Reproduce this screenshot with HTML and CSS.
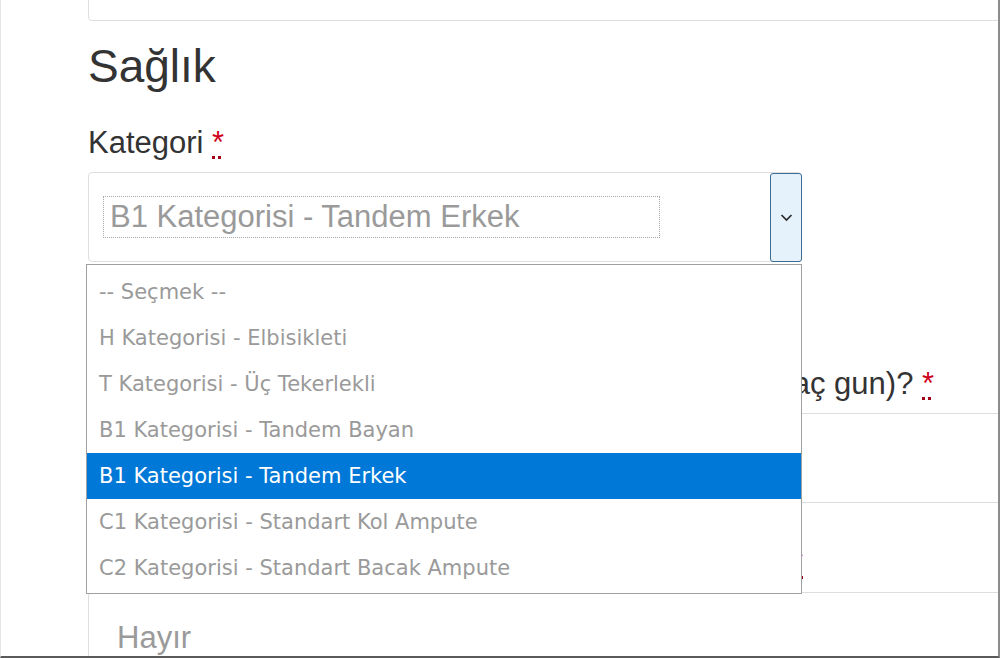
FILE: index.html
```html
<!DOCTYPE html>
<html lang="tr">
<head>
<meta charset="utf-8">
<title>Sağlık</title>
<link rel="stylesheet" href="styles.css">
</head>
<body>
<div class="frame">
  <div class="page">
    <div class="input top-input"></div>
    <h2 class="section-title">Sağlık</h2>

    <div class="group group-first">
      <label class="label">Kategori <abbr class="req" title="zorunlu">*</abbr></label>
      <div class="select">
        <div class="select-value"><span class="focus">B1 Kategorisi - Tandem Erkek</span></div>
        <div class="select-btn">
          <svg width="13" height="9" viewBox="0 0 13 9"><polyline points="1.5,2 6.5,7 11.5,2" fill="none" stroke="#2b2b2b" stroke-width="1.7"/></svg>
        </div>
        <ul class="listbox">
          <li>-- Seçmek --</li>
          <li>H Kategorisi - Elbisikleti</li>
          <li>T Kategorisi - Üç Tekerlekli</li>
          <li>B1 Kategorisi - Tandem Bayan</li>
          <li class="selected">B1 Kategorisi - Tandem Erkek</li>
          <li>C1 Kategorisi - Standart Kol Ampute</li>
          <li>C2 Kategorisi - Standart Bacak Ampute</li>
        </ul>
      </div>
    </div>

    <div class="group group-second">
      <label class="label">Son bir yılda toplam hastanede yatış süresi nedir (kaç gun)? <abbr class="req" title="zorunlu">*</abbr></label>
      <div class="input"></div>
    </div>

    <div class="group group-third">
      <label class="label">Sürekli biçimde kullandığınız başka bir ilaç var mı? <abbr class="req" title="zorunlu">*</abbr></label>
      <div class="input"><span class="input-value">Hayır</span></div>
    </div>
  </div>
</div>
</body>
</html>
```

FILE: styles.css
```css
* {
  box-sizing: border-box;
}

body {
  margin: 0;
  background: #fff;
  font-family: "Liberation Sans", Arial, sans-serif;
}

.frame {
  width: 1000px;
  height: 658px;
  overflow: hidden;
  background: #fff;
  border-left: 1px solid #e6e6e6;
  border-right: 2px solid #8c8c8c;
  border-bottom: 2px solid #5a5a5a;
}

.page {
  width: 1048px;
  padding-left: 87px;
}

.input {
  height: 90px;
  border: 1px solid #dedede;
  border-radius: 4px;
  background: #fff;
}

.top-input {
  margin-top: -69px;
}

.section-title {
  margin: 20px 0 0;
  font-size: 46px;
  line-height: 50px;
  font-weight: 400;
  color: #333;
}

.group-first {
  margin-top: 34px;
}

.group-second {
  margin-top: 104px;
}

.group-third {
  margin-top: 42px;
}

.label {
  display: block;
  font-size: 31px;
  line-height: 36px;
  color: #333;
  margin-bottom: 11px;
  white-space: nowrap;
}

.req {
  color: #d0021b;
  text-decoration: underline dotted #a0001a;
  text-decoration-thickness: 3px;
  text-underline-offset: 3px;
}

.select {
  position: relative;
  display: flex;
  width: 714px;
  height: 90px;
  border: 1px solid #dedede;
  border-radius: 4px;
  background: #fff;
}

.select-value {
  flex: 1;
  padding: 23px 0 0 14px;
}

.focus {
  display: block;
  width: 557px;
  height: 42px;
  border: 1px dotted #a8a8a8;
  padding-left: 6px;
  line-height: 40px;
  font-size: 31px;
  color: #9a9a9a;
  white-space: nowrap;
}

.select-btn {
  width: 32px;
  margin: 0 -1px -1px 0;
  background: #e5f1fb;
  border: 1px solid #3b6d97;
  border-radius: 3px;
  display: flex;
  align-items: center;
  justify-content: center;
}

.listbox {
  position: absolute;
  left: -3px;
  top: 91px;
  width: 716px;
  margin: 0;
  padding: 4px 0 2px;
  list-style: none;
  background: #fff;
  border: 1px solid #a0a0a0;
  z-index: 10;
  font-family: "DejaVu Sans", Verdana, sans-serif;
  font-size: 21px;
  color: #9a9a9a;
}

.listbox li {
  height: 46px;
  line-height: 46px;
  padding-left: 12px;
  white-space: nowrap;
}

.listbox li.selected {
  background: #0078d7;
  color: #fff;
}

.input-value {
  display: block;
  padding: 25px 0 0 28px;
  font-size: 31px;
  line-height: 40px;
  color: #9a9a9a;
}
```
